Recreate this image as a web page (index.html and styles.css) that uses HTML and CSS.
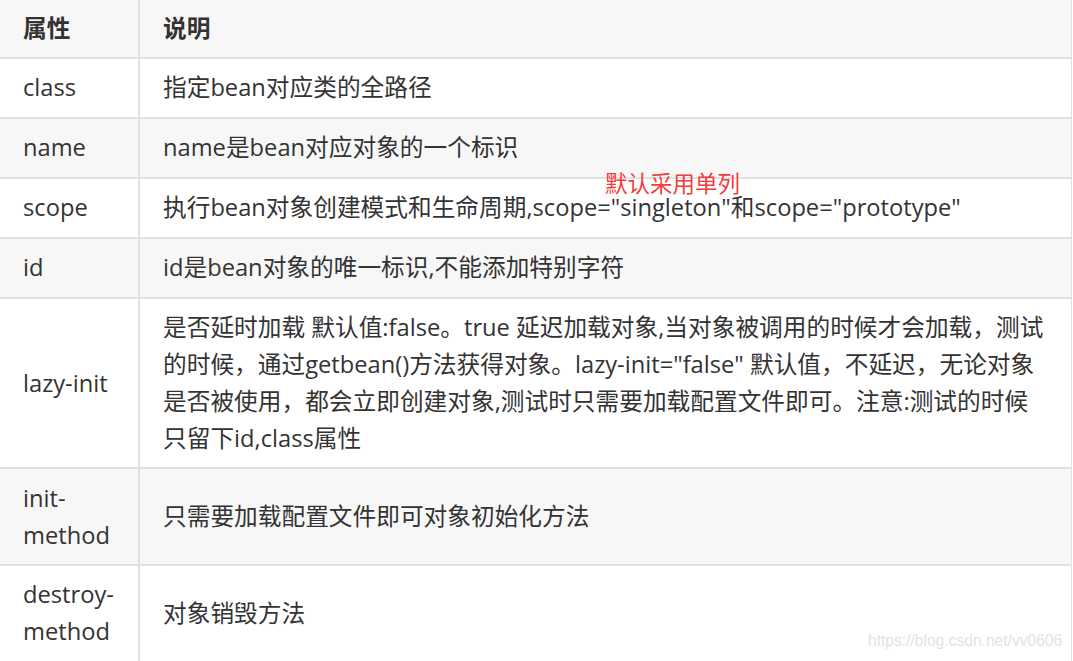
FILE: index.html
```html
<!DOCTYPE html>
<html lang="zh-CN">
<head>
<meta charset="utf-8">
<link rel="stylesheet" href="styles.css">
</head>
<body>
<div class="page">
  <table class="attrs">
    <colgroup><col class="c1"><col class="c2"></colgroup>
    <thead>
      <tr><th>属性</th><th>说明</th></tr>
    </thead>
    <tbody>
      <tr><td>class</td><td>指定bean对应类的全路径</td></tr>
      <tr><td>name</td><td>name是bean对应对象的一个标识</td></tr>
      <tr><td>scope</td><td>执行bean对象创建模式和生命周期,scope="singleton"和scope="prototype"</td></tr>
      <tr><td>id</td><td>id是bean对象的唯一标识,不能添加特别字符</td></tr>
      <tr><td>lazy-init</td><td>是否延时加载 默认值:false。true 延迟加载对象,当对象被调用的时候才会加载，测试<br>的时候，通过getbean()方法获得对象。lazy-init="false" 默认值，不延迟，无论对象<br>是否被使用，都会立即创建对象,测试时只需要加载配置文件即可。注意:测试的时候<br>只留下id,class属性</td></tr>
      <tr><td>init-method</td><td>只需要加载配置文件即可对象初始化方法</td></tr>
      <tr><td>destroy-method</td><td>对象销毁方法</td></tr>
    </tbody>
  </table>
  <div class="note">默认采用单列</div>
  <div class="watermark">https://blog.csdn.net/vv0606</div>
</div>
</body>
</html>
```
FILE: styles.css
```css
html, body {
  margin: 0;
  padding: 0;
  background: #ffffff;
}
.page {
  position: relative;
  width: 1073px;
  height: 661px;
  overflow: hidden;
}
.attrs {
  border-collapse: separate;
  border-spacing: 0;
  width: 1072px;
  table-layout: fixed;
  border-right: 1px solid #dfe2e5;
  font-family: "Open Sans", "Noto Sans CJK SC", sans-serif;
  font-size: 23.7px;
  line-height: 36.8px;
  color: #333333;
}
.c1 { width: 140px; }
.attrs th,
.attrs td {
  padding: 10.6px 23px;
  text-align: left;
  vertical-align: middle;
  border-bottom: 2px solid #dfe2e5;
  word-wrap: break-word;
}
.attrs th {
  font-weight: 700;
  padding-top: 10px;
  padding-bottom: 10px;
}
.attrs th:first-child,
.attrs td:first-child {
  border-right: 2px solid #dfe2e5;
}
.attrs thead tr { background: #f7f7f7; }
.attrs tbody tr:nth-child(2n) { background: #f7f7f7; }
.note {
  position: absolute;
  left: 605px;
  top: 167px;
  font-family: "Noto Sans CJK SC", sans-serif;
  font-size: 22.5px;
  line-height: 30px;
  color: #f53b3b;
}
.watermark {
  position: absolute;
  left: 868px;
  top: 632px;
  font-family: "Liberation Sans", Arial, sans-serif;
  font-size: 15.6px;
  color: #e3e3e3;
}
```
